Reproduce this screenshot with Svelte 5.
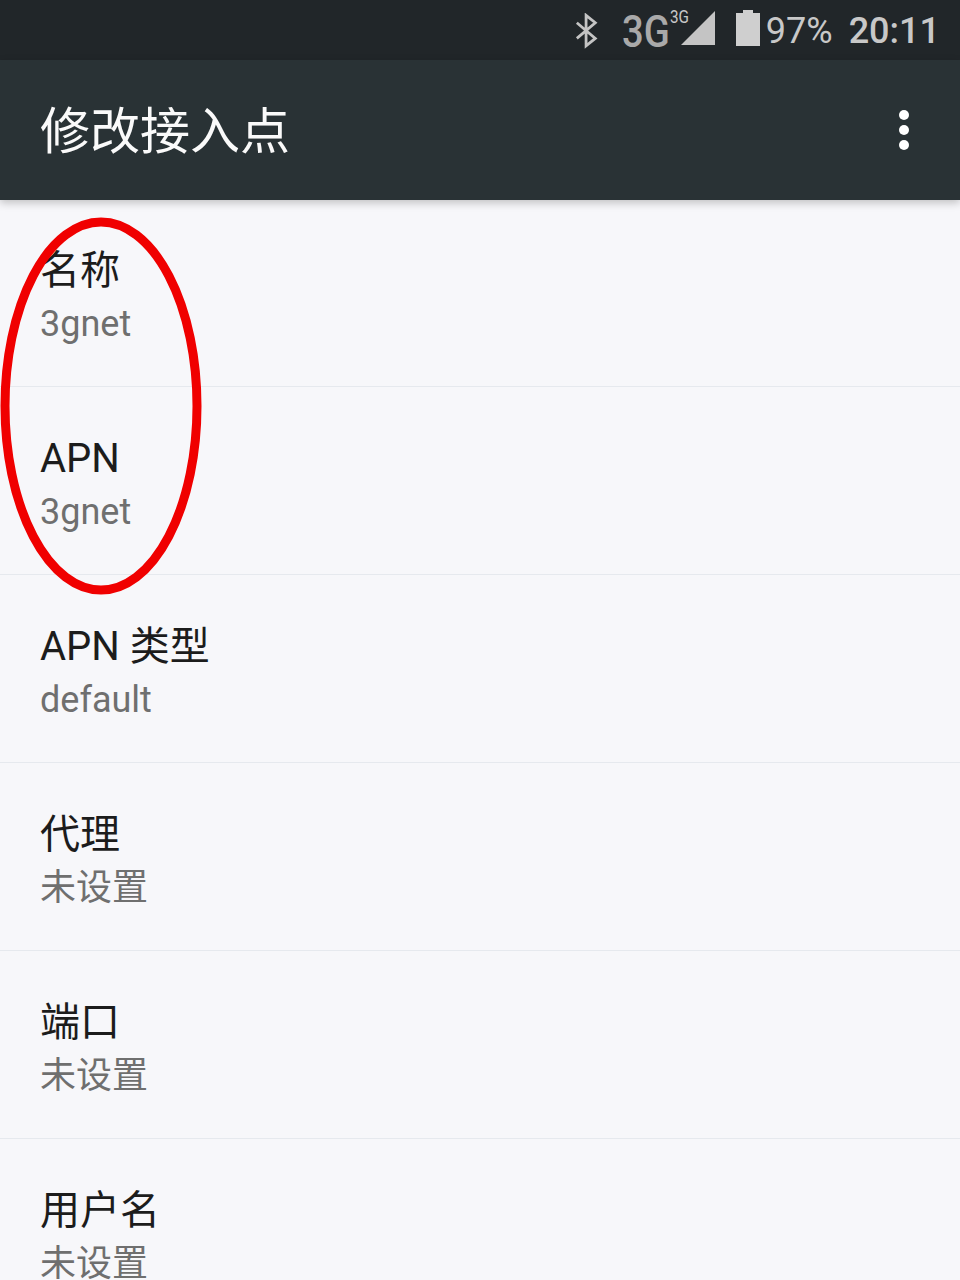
<script>
  const rows = [
    { title: '名称', value: '3gnet' },
    { title: 'APN', value: '3gnet' },
    { title: 'APN 类型', value: 'default' },
    { title: '代理', value: '未设置' },
    { title: '端口', value: '未设置' },
    { title: '用户名', value: '未设置' }
  ];
</script>

<div class="screen">
  <div class="status">
    <svg class="bt" width="24" height="36" viewBox="0 0 26 36" aria-hidden="true">
      <path d="M2 26 L22 9 L12 1 V34 L22 26 L2 9" fill="none" stroke="#c4c4c4" stroke-width="3" />
    </svg>
    <span class="net">3G</span>
    <span class="sig">
      <span class="net-small">3G</span>
      <svg width="36" height="36" viewBox="0 0 36 36" aria-hidden="true">
        <path d="M1 35 L35 1 V35 Z" fill="#c4c4c4" />
      </svg>
    </span>
    <svg class="batt" width="24" height="36" viewBox="0 0 24 36" aria-hidden="true">
      <path d="M0 3 H7 V0 H17 V3 H24 V36 H0 Z" fill="#cfcfcf" />
    </svg>
    <span class="pct">97%</span>
    <span class="time">20:11</span>
  </div>

  <header class="bar">
    <h1>修改接入点</h1>
    <div class="more" aria-hidden="true"><i></i><i></i><i></i></div>
  </header>

  <ul class="list">
    {#each rows as row}
      <li>
        <div class="title">{row.title}</div>
        <div class="value">{row.value}</div>
      </li>
    {/each}
  </ul>

  <svg class="circle" width="204" height="380" viewBox="0 0 204 380" aria-hidden="true">
    <ellipse cx="101" cy="189" rx="96" ry="184" fill="none" stroke="#f00000" stroke-width="9" />
  </svg>
</div>

<style>
  :global(body) {
    margin: 0;
  }
  .screen {
    position: relative;
    width: 960px;
    height: 1280px;
    overflow: hidden;
    background: #f7f7fa;
    font-family: Roboto, "Noto Sans CJK SC", sans-serif;
  }
  .status {
    height: 60px;
    background: #212629;
    display: flex;
    align-items: center;
    justify-content: flex-end;
    padding-right: 20px;
    color: #c8c8c8;
    box-sizing: border-box;
  }
  .bt {
    margin-right: 23px;
    margin-top: 2px;
  }
  .net {
    width: 46px;
    font-size: 45px;
    font-weight: 500;
    color: #a9a9a9;
    line-height: 1;
    margin-top: 2px;
    transform: scaleX(0.85);
    transform-origin: left;
    white-space: nowrap;
  }
  .sig {
    position: relative;
    display: flex;
    margin-left: 12px;
    margin-right: 20px;
    margin-top: -4px;
  }
  .net-small {
    position: absolute;
    left: -10px;
    top: -4px;
    font-size: 18px;
    color: #c8c8c8;
    transform: scaleX(0.85);
    transform-origin: left;
  }
  .batt {
    margin-top: -4px;
    margin-right: 6px;
  }
  .pct,
  .time {
    font-size: 36px;
    line-height: 1;
    margin-top: 2px;
  }
  .time {
    margin-left: 16px;
    font-weight: 500;
  }
  .bar {
    height: 140px;
    background: #293235;
    display: flex;
    align-items: center;
    justify-content: space-between;
    padding: 0 51px 0 40px;
    box-shadow: 0 3px 8px rgba(0, 0, 0, 0.22);
    position: relative;
  }
  h1 {
    margin: 4px 0 0;
    font-size: 50px;
    font-weight: 400;
    color: #fafafa;
    line-height: 1;
  }
  .more {
    display: flex;
    flex-direction: column;
    gap: 5px;
  }
  .more i {
    display: block;
    width: 10px;
    height: 10px;
    border-radius: 50%;
    background: #fff;
  }
  .list {
    list-style: none;
    margin: -1px 0 0;
    padding: 0;
  }
  li {
    height: 188px;
    box-sizing: border-box;
    padding: 46px 40px 0;
    border-bottom: 1px solid #e6e9ee;
  }
  .title {
    font-size: 40px;
    line-height: 52px;
    color: #1c1c1c;
  }
  .value {
    font-size: 36px;
    line-height: 46px;
    margin-top: 4px;
    color: #6f6f6f;
  }
  .circle {
    position: absolute;
    left: 0;
    top: 217px;
  }
</style>
